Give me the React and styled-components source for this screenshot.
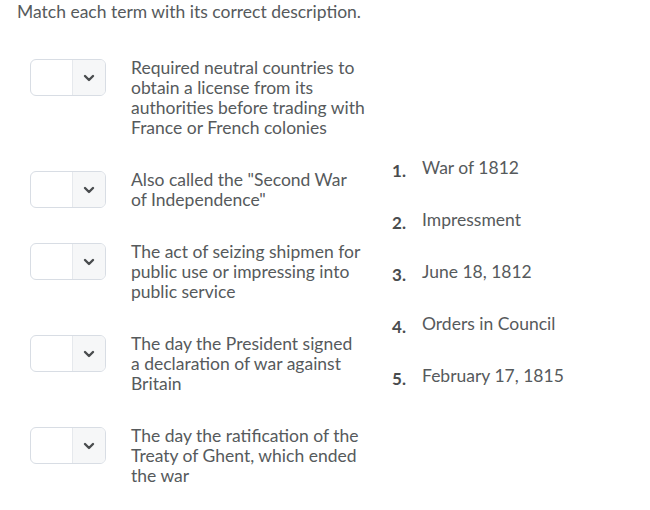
import styled, { createGlobalStyle } from "styled-components";

const GlobalStyle = createGlobalStyle`
  body {
    margin: 0;
    background: #ffffff;
    font-family: Lato, "Liberation Sans", sans-serif;
    color: #565a5c;
  }
`;

const Page = styled.div`
  padding: 2px 17px 0;
`;

const Title = styled.div`
  font-size: 17.5px;
  line-height: 20px;
  margin-bottom: 36px;
`;

const Content = styled.div`
  display: flex;
  flex-direction: row;
`;

const Questions = styled.div`
  display: flex;
  flex-direction: column;
  gap: 32px;
  margin-left: 13px;
  width: 340px;
`;

const QuestionRow = styled.div`
  display: flex;
  flex-direction: row;
  align-items: flex-start;
  gap: 25px;
`;

const Select = styled.div`
  box-sizing: border-box;
  flex: none;
  display: flex;
  width: 76px;
  height: 37px;
  margin-top: 1px;
  border: 1px solid #d8dde4;
  border-radius: 6px;
  overflow: hidden;
  background: #ffffff;
`;

const SelectValue = styled.div`
  flex: 1;
`;

const SelectArrow = styled.div`
  width: 32px;
  display: flex;
  align-items: center;
  justify-content: center;
  border-left: 1px solid #e6e9ed;
  background: #f6f7f8;
`;

const Description = styled.div`
  width: 234px;
  font-size: 17.5px;
  line-height: 20px;
`;

const Choices = styled.ol`
  list-style: none;
  margin: 0;
  padding: 100px 0 0 22px;
  display: flex;
  flex-direction: column;
  gap: 32px;
`;

const Choice = styled.li`
  display: flex;
  flex-direction: row;
  font-size: 17.5px;
  line-height: 20px;
  white-space: nowrap;
`;

const ChoiceNumber = styled.span`
  width: 30px;
  font-size: 17px;
  font-weight: 700;
  color: #494c4e;
  position: relative;
  top: 3px;
`;

function Chevron() {
  return (
    <svg width="12" height="8" viewBox="0 0 12 8">
      <path d="M2 2 L6 6 L10 2" fill="none" stroke="#494c4e" strokeWidth="2.4" strokeLinecap="round" strokeLinejoin="round" />
    </svg>
  );
}

const questions = [
  "Required neutral countries to obtain a license from its authorities before trading with France or French colonies",
  'Also called the "Second War of Independence"',
  "The act of seizing shipmen for public use or impressing into public service",
  "The day the President signed a declaration of war against Britain",
  "The day the ratification of the Treaty of Ghent, which ended the war",
];

const choices = ["War of 1812", "Impressment", "June 18, 1812", "Orders in Council", "February 17, 1815"];

export default function App() {
  return (
    <>
      <GlobalStyle />
      <Page>
        <Title>Match each term with its correct description.</Title>
        <Content>
          <Questions>
            {questions.map((q, ix) => (
              <QuestionRow key={ix}>
                <Select>
                  <SelectValue />
                  <SelectArrow>
                    <Chevron />
                  </SelectArrow>
                </Select>
                <Description>{q}</Description>
              </QuestionRow>
            ))}
          </Questions>
          <Choices>
            {choices.map((c, ix) => (
              <Choice key={ix}>
                <ChoiceNumber>{ix + 1}.</ChoiceNumber>
                <span>{c}</span>
              </Choice>
            ))}
          </Choices>
        </Content>
      </Page>
    </>
  );
}
